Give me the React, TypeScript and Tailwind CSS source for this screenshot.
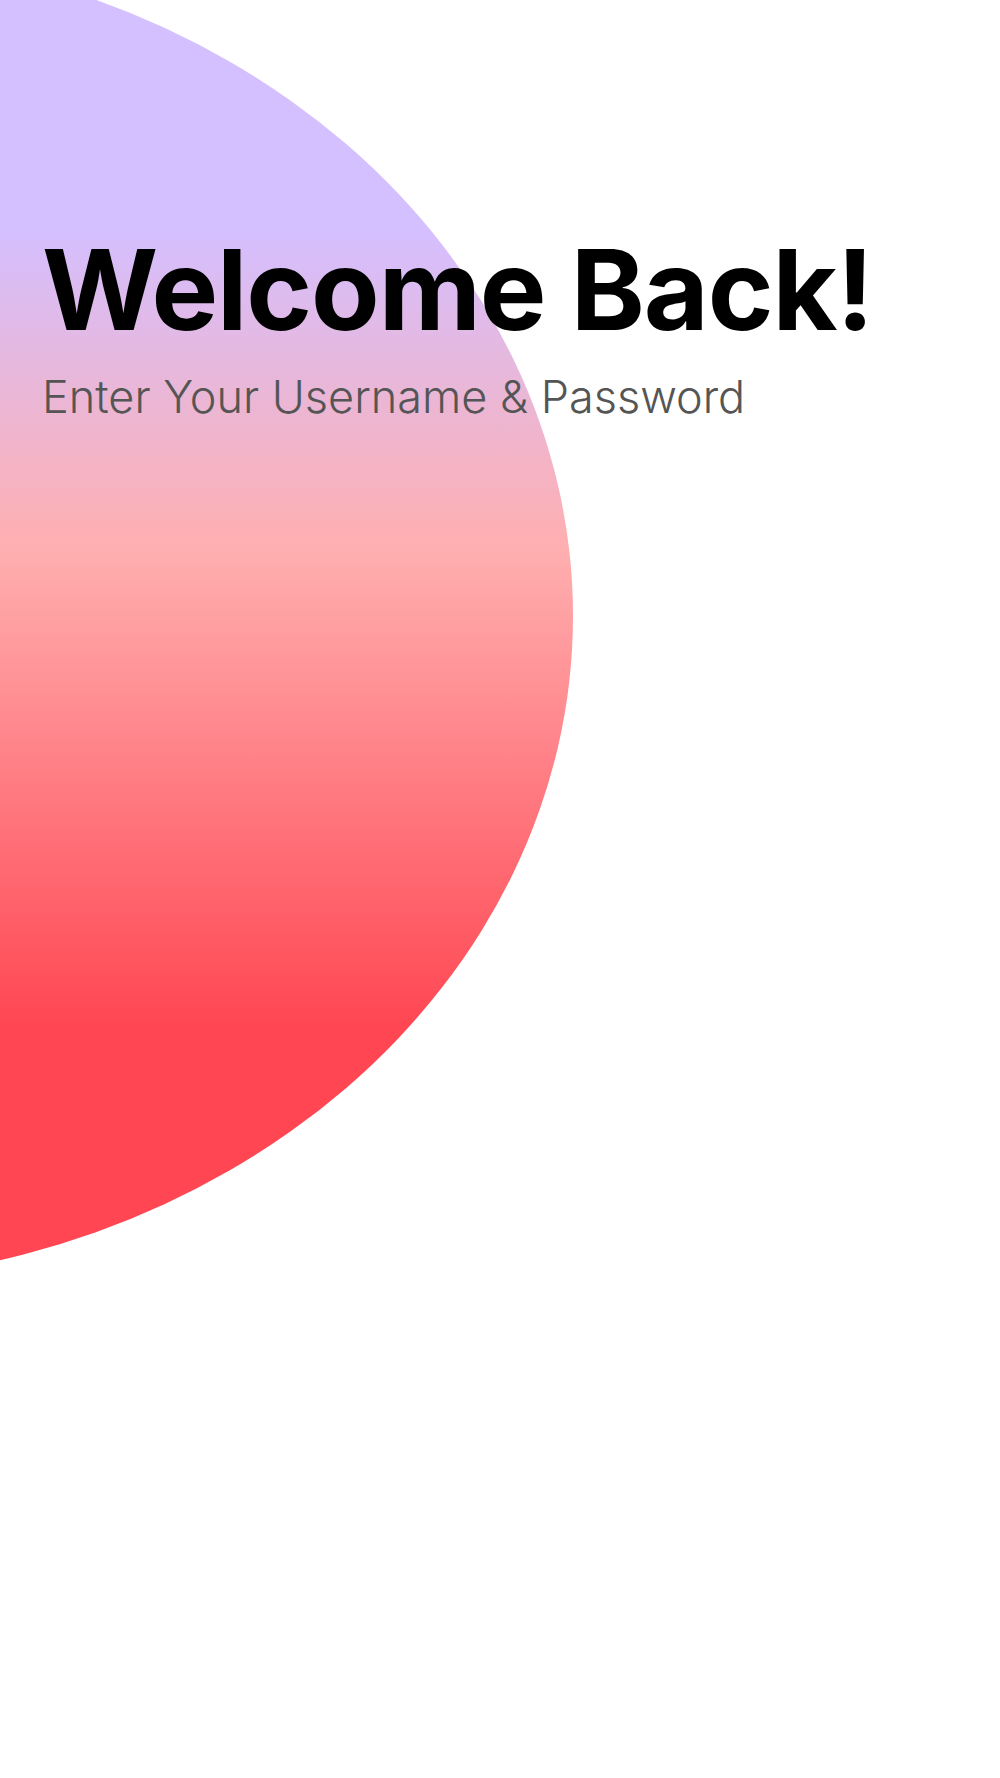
import React from "react";

export default function App() {
  return (
    <div className="relative w-full min-h-[1778px] overflow-hidden bg-white" style={{ fontFamily: "Inter, 'Noto Sans', sans-serif" }}>
      <div className="absolute left-[-973px] top-[-51px] w-[1546px] h-[1334px] rounded-[50%] bg-[linear-gradient(to_bottom,#d4bfff_0%,#d4bfff_21%,#ffafb0_45%,#ff4652_81%,#ff4652_100%)]" />
      <div className="relative px-[42px] pt-[233px]">
        <h1 className="text-[112px] leading-none font-bold text-black tracking-[-0.01em] font-['Inter',sans-serif]">Welcome Back!</h1>
        <p className="mt-[29px] text-[45px] leading-none font-light text-[#555555] font-['Inter',sans-serif]">Enter Your Username &amp; Password</p>
      </div>
    </div>
  );
}
